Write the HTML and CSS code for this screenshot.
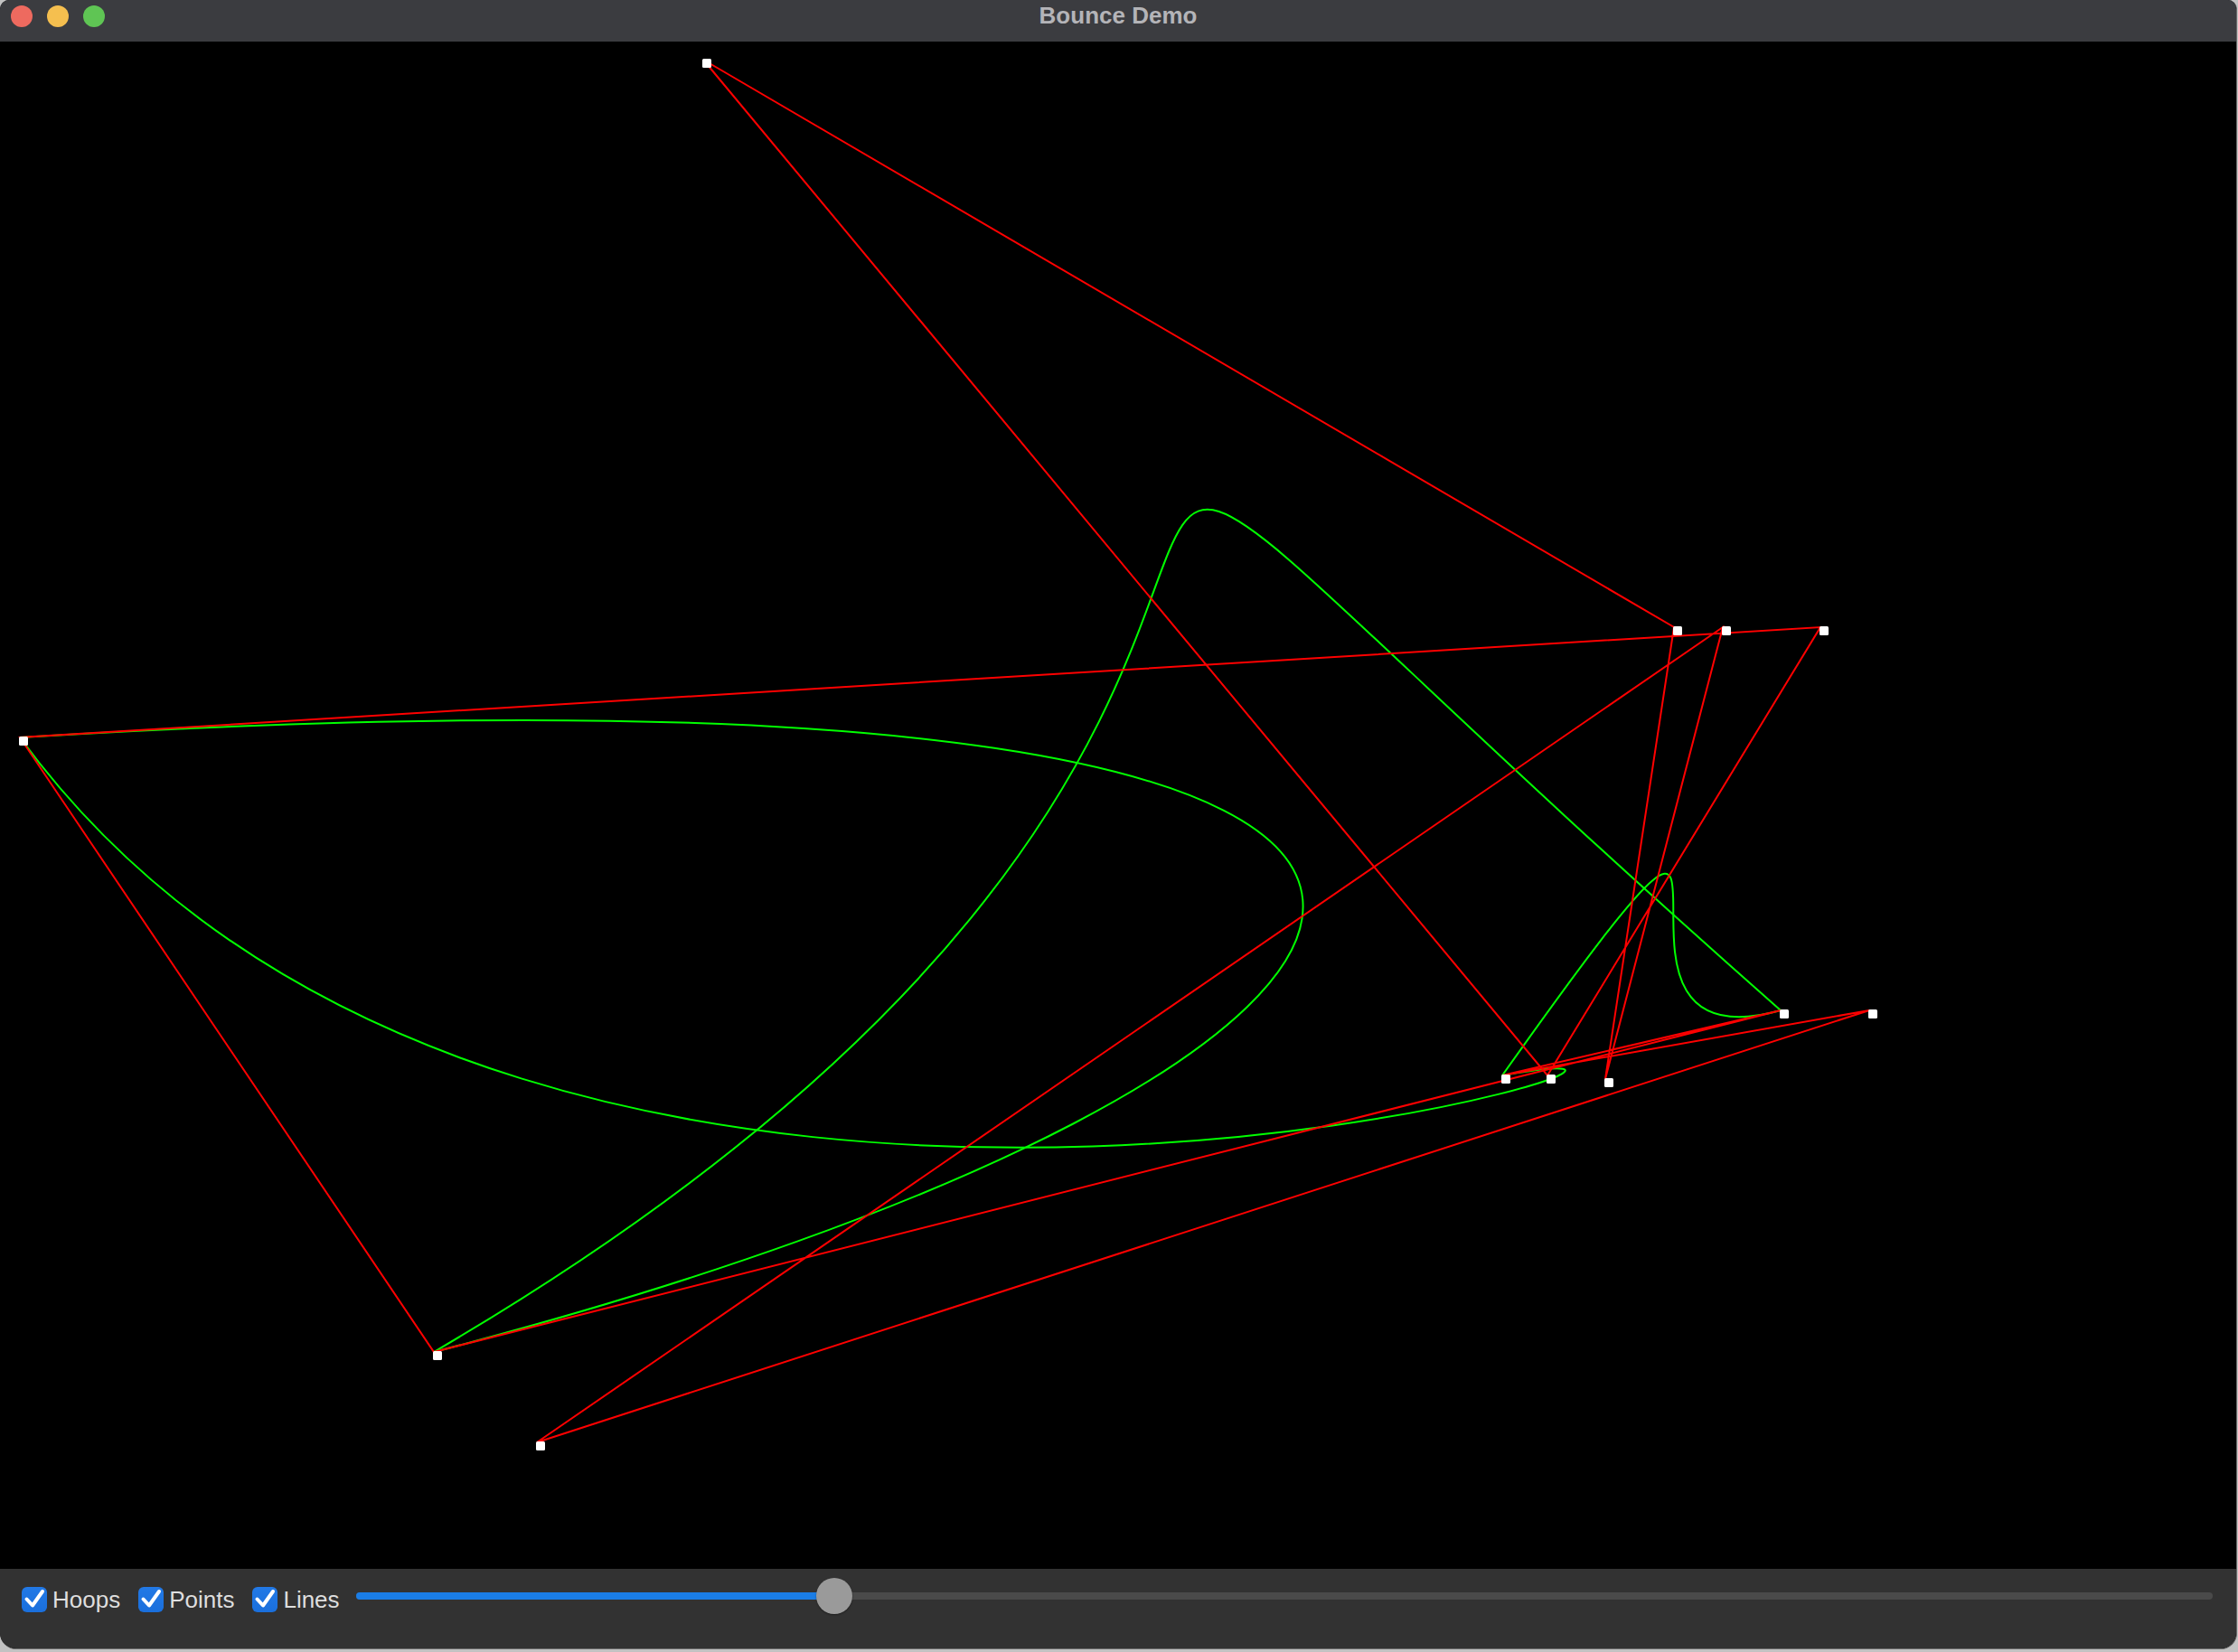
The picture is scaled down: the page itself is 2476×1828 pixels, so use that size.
FILE: index.html
```html
<!DOCTYPE html>
<html lang="en">
<head>
<meta charset="utf-8">
<title>Bounce Demo</title>
<link rel="stylesheet" href="styles.css">
</head>
<body>
<div class="window">
  <header class="titlebar">
    <div class="lights">
      <span class="light close"></span>
      <span class="light minimize"></span>
      <span class="light zoom"></span>
    </div>
    <div class="title">Bounce Demo</div>
  </header>
  <main class="canvas">
    <svg class="scene" width="2474" height="1690" viewBox="0 46 2474 1690" xmlns="http://www.w3.org/2000/svg">
      <g class="hoops" fill="none" stroke="#00ff00" stroke-width="2">
        <path d="M480 1496 C1852 694 778 66 1970 1118"/>
        <path d="M22 816 C2014 694 1662 1190 480 1496"/>
        <path d="M22 816 C594 1596 2068 1118 1662 1190"/>
        <path d="M1662 1190 C2014 694 1712 1190 1970 1118"/>
      </g>
      <polygon class="lines" fill="none" stroke="#ff0000" stroke-width="2" stroke-linejoin="miter"
        points="778,66 1852,694 1776,1194 1906,694 594,1596 2068,1118 1662,1190 1970,1118 480,1496 22,816 2014,694 1712,1190"/>
      <g class="points" fill="#ffffff">
        <rect x="777" y="65" width="10" height="10" rx="1.5"/>
        <rect x="21" y="815" width="10" height="10" rx="1.5"/>
        <rect x="479" y="1495" width="10" height="10" rx="1.5"/>
        <rect x="593" y="1595" width="10" height="10" rx="1.5"/>
        <rect x="1851" y="693" width="10" height="10" rx="1.5"/>
        <rect x="1905" y="693" width="10" height="10" rx="1.5"/>
        <rect x="2013" y="693" width="10" height="10" rx="1.5"/>
        <rect x="1969" y="1117" width="10" height="10" rx="1.5"/>
        <rect x="2067" y="1117" width="10" height="10" rx="1.5"/>
        <rect x="1661" y="1189" width="10" height="10" rx="1.5"/>
        <rect x="1711" y="1189" width="10" height="10" rx="1.5"/>
        <rect x="1775" y="1193" width="10" height="10" rx="1.5"/>
      </g>
    </svg>
  </main>
  <footer class="controls">
    <label class="check">
      <span class="box"><svg viewBox="0 0 28 28" width="28" height="28"><path d="M5.5 13.5 L12 20.5 L23 5" fill="none" stroke="#fff" stroke-width="4" stroke-linecap="round" stroke-linejoin="round"/></svg></span>
      <span class="label">Hoops</span>
    </label>
    <label class="check">
      <span class="box"><svg viewBox="0 0 28 28" width="28" height="28"><path d="M5.5 13.5 L12 20.5 L23 5" fill="none" stroke="#fff" stroke-width="4" stroke-linecap="round" stroke-linejoin="round"/></svg></span>
      <span class="label">Points</span>
    </label>
    <label class="check">
      <span class="box"><svg viewBox="0 0 28 28" width="28" height="28"><path d="M5.5 13.5 L12 20.5 L23 5" fill="none" stroke="#fff" stroke-width="4" stroke-linecap="round" stroke-linejoin="round"/></svg></span>
      <span class="label">Lines</span>
    </label>
    <div class="slider">
      <div class="track">
        <div class="fill" style="width: 529px"></div>
        <div class="thumb"></div>
      </div>
    </div>
  </footer>
</div>
</body>
</html>
```
FILE: styles.css
```css
* { box-sizing: border-box; }

html, body {
  margin: 0;
  padding: 0;
  background: #c2c2c2;
  width: 2476px;
  height: 1828px;
  overflow: hidden;
}

.window {
  width: 2475px;
  height: 1825px;
  border-right: 1px solid #6a6a6a;
  border-bottom: 1px solid #6a6a6a;
  border-radius: 10px 10px 18px 18px;
  overflow: hidden;
  display: flex;
  flex-direction: column;
  background: #000;
}

.titlebar {
  height: 46px;
  flex: 0 0 46px;
  background: #3b3c40;
  position: relative;
  display: flex;
  justify-content: center;
}

.lights {
  position: absolute;
  left: 12px;
  top: 6px;
  display: flex;
  gap: 16px;
}

.light {
  width: 24px;
  height: 24px;
  border-radius: 50%;
  display: block;
}
.light.close { background: #ee6a5f; }
.light.minimize { background: #f5bf4f; }
.light.zoom { background: #5fc554; }

.title {
  font-family: "Liberation Sans", Arial, sans-serif;
  font-weight: bold;
  font-size: 26px;
  line-height: 34px;
  height: 34px;
  color: #b4b4b8;
}

.canvas {
  flex: 0 0 1690px;
  height: 1690px;
  background: #000;
}

.scene { display: block; }

.controls {
  flex: 0 0 88px;
  height: 88px;
  background: #323232;
  display: flex;
  align-items: flex-start;
  padding: 10px 26px 0 24px;
  gap: 20px;
  font-family: "Liberation Sans", Arial, sans-serif;
}

.check {
  display: flex;
  align-items: center;
  gap: 6px;
  height: 40px;
  margin-top: 4px;
}

.box {
  width: 28px;
  height: 28px;
  border-radius: 6px;
  background: linear-gradient(#2279e6, #1a6fdc);
  display: block;
}
.box svg { display: block; }

.label {
  font-size: 26px;
  line-height: 28px;
  color: #dedede;
}

.slider {
  flex: 1;
  height: 40px;
  display: flex;
  align-items: center;
  margin-left: -2px;
}

.track {
  position: relative;
  width: 100%;
  height: 8px;
  border-radius: 4px;
  background: #4a4a4a;
}

.fill {
  height: 8px;
  border-radius: 4px;
  background: #1a7de6;
}

.thumb {
  position: absolute;
  top: -16px;
  left: 509px;
  width: 40px;
  height: 40px;
  border-radius: 50%;
  background: #9a9a9a;
  box-shadow: 0 1px 2px rgba(0,0,0,0.4);
}
```
